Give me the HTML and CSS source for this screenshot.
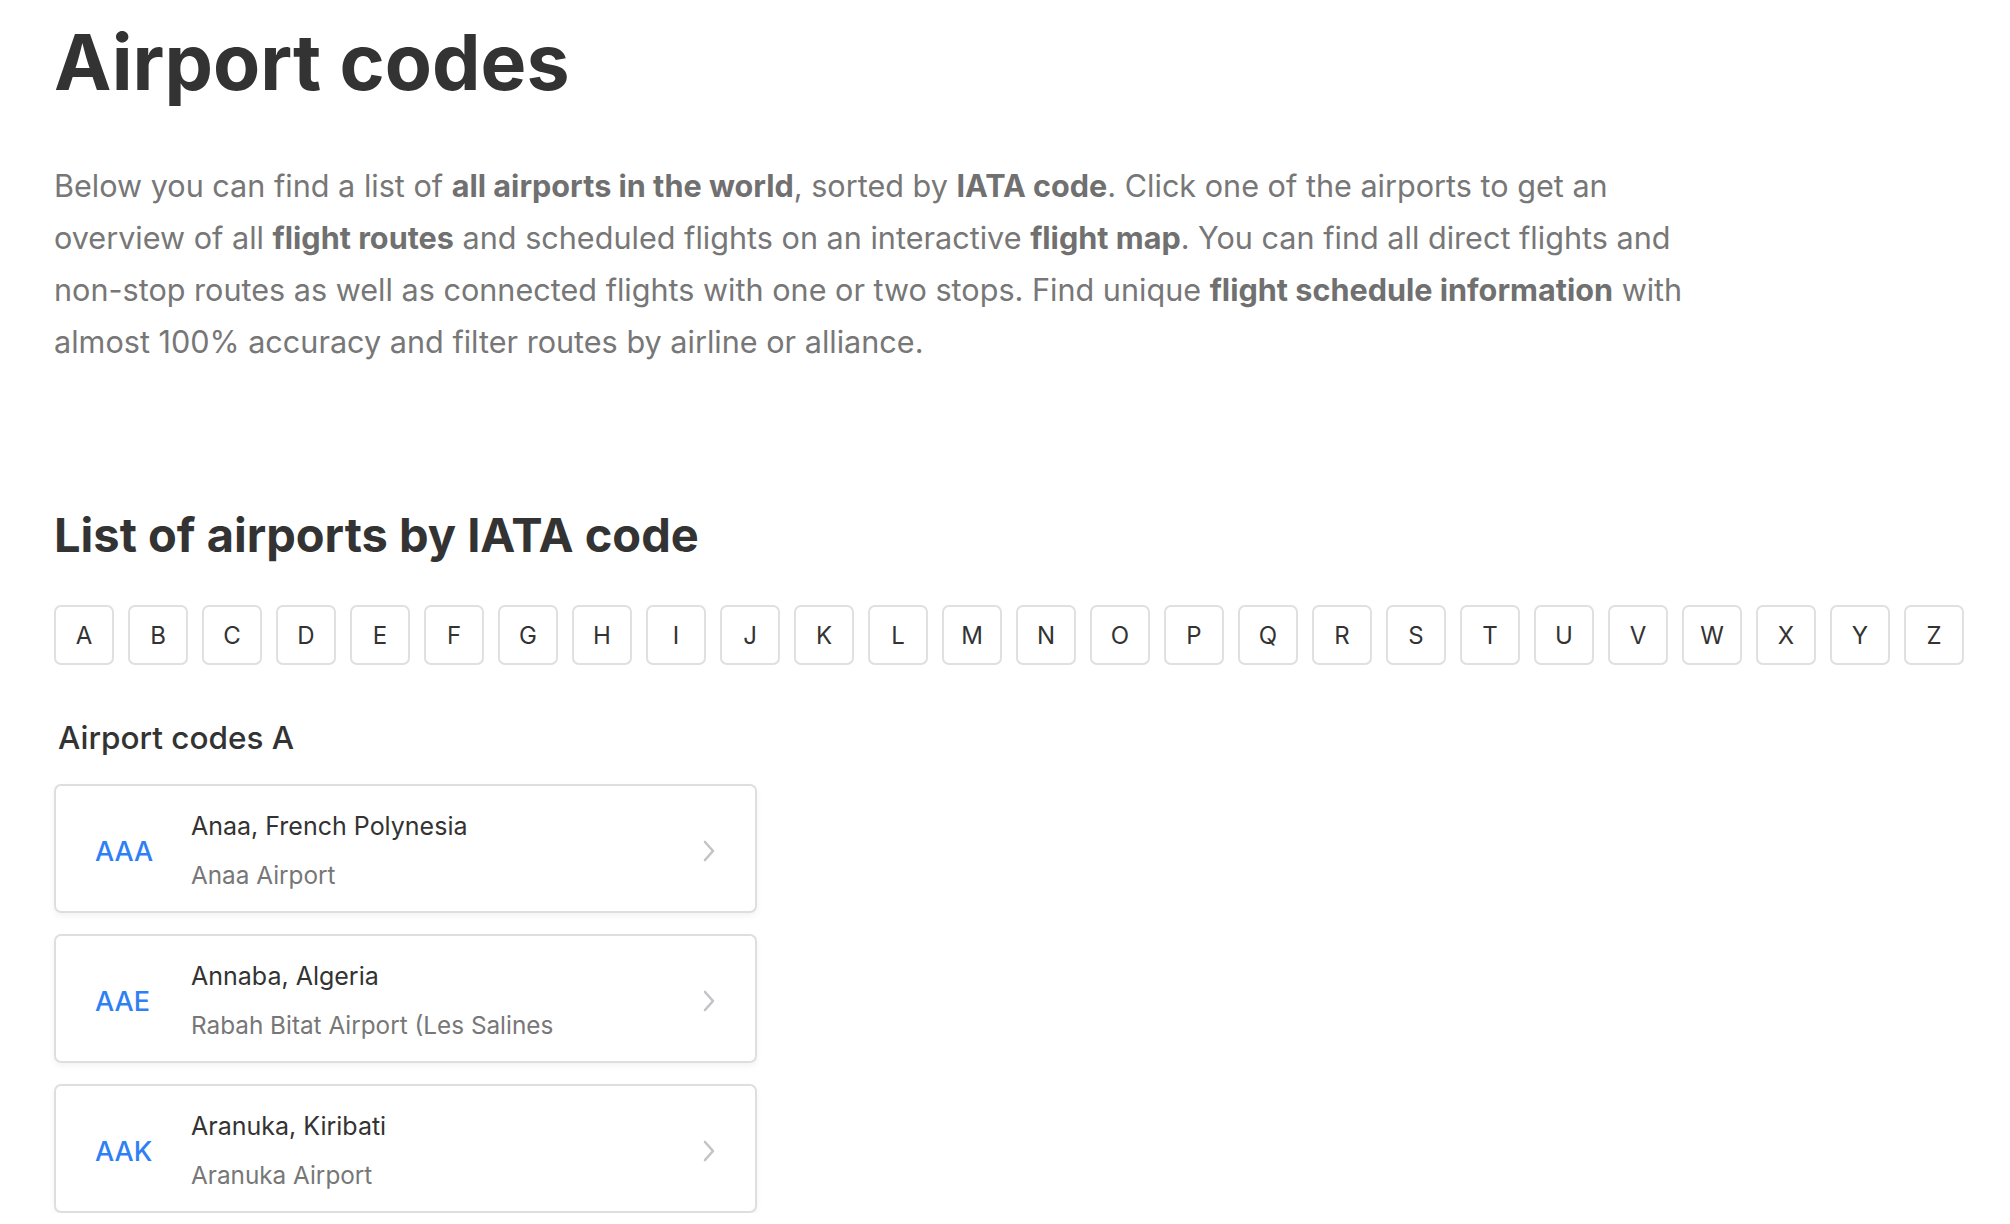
FILE: index.html
```html
<!DOCTYPE html>
<html lang="en">
<head>
<meta charset="utf-8">
<title>Airport codes</title>
<link rel="stylesheet" href="styles.css">
</head>
<body>
<main class="page">
  <h1 class="title">Airport codes</h1>
  <p class="intro">Below you can find a list of <b>all airports in the world</b>, sorted by <b>IATA code</b>. Click one of the airports to get an overview of all <b>flight routes</b> and scheduled flights on an interactive <b>flight map</b>. You can find all direct flights and non-stop routes as well as connected flights with one or two stops. Find unique <b>flight schedule information</b> with almost 100% accuracy and filter routes by airline or alliance.</p>

  <h2 class="section-title">List of airports by IATA code</h2>
  <nav class="letters">
    <a class="letter" href="#">A</a><a class="letter" href="#">B</a><a class="letter" href="#">C</a><a class="letter" href="#">D</a><a class="letter" href="#">E</a><a class="letter" href="#">F</a><a class="letter" href="#">G</a><a class="letter" href="#">H</a><a class="letter" href="#">I</a><a class="letter" href="#">J</a><a class="letter" href="#">K</a><a class="letter" href="#">L</a><a class="letter" href="#">M</a><a class="letter" href="#">N</a><a class="letter" href="#">O</a><a class="letter" href="#">P</a><a class="letter" href="#">Q</a><a class="letter" href="#">R</a><a class="letter" href="#">S</a><a class="letter" href="#">T</a><a class="letter" href="#">U</a><a class="letter" href="#">V</a><a class="letter" href="#">W</a><a class="letter" href="#">X</a><a class="letter" href="#">Y</a><a class="letter" href="#">Z</a>
  </nav>

  <h3 class="group-title">Airport codes A</h3>
  <ul class="airport-list">
    <li class="card">
      <span class="code">AAA</span>
      <span class="info"><span class="city">Anaa, French Polynesia</span><span class="airport">Anaa Airport</span></span>
      <svg class="chevron" viewBox="0 0 14 24" width="14" height="24"><polyline points="3,3 11,12 3,21" fill="none" stroke="#c4c4c8" stroke-width="2.6" stroke-linecap="round" stroke-linejoin="round"/></svg>
    </li>
    <li class="card">
      <span class="code">AAE</span>
      <span class="info"><span class="city">Annaba, Algeria</span><span class="airport">Rabah Bitat Airport (Les Salines</span></span>
      <svg class="chevron" viewBox="0 0 14 24" width="14" height="24"><polyline points="3,3 11,12 3,21" fill="none" stroke="#c4c4c8" stroke-width="2.6" stroke-linecap="round" stroke-linejoin="round"/></svg>
    </li>
    <li class="card">
      <span class="code">AAK</span>
      <span class="info"><span class="city">Aranuka, Kiribati</span><span class="airport">Aranuka Airport</span></span>
      <svg class="chevron" viewBox="0 0 14 24" width="14" height="24"><polyline points="3,3 11,12 3,21" fill="none" stroke="#c4c4c8" stroke-width="2.6" stroke-linecap="round" stroke-linejoin="round"/></svg>
    </li>
  </ul>
</main>
</body>
</html>
```

FILE: styles.css
```css
html, body {
  margin: 0;
  padding: 0;
  background: #ffffff;
}

body {
  font-family: Inter, "Liberation Sans", Arial, sans-serif;
  color: #333333;
}

.page {
  padding: 24px 0 0 54px;
}

.title {
  margin: 0;
  font-size: 77px;
  line-height: 1;
  font-weight: 700;
  color: #333333;
}

.intro {
  margin: 59px 0 0;
  width: 1672px;
  font-size: 30.6px;
  line-height: 52px;
  font-weight: 400;
  color: #777777;
}

.intro b {
  font-weight: 700;
  color: #707070;
}

.section-title {
  margin: 143px 0 0;
  font-size: 47px;
  line-height: 1;
  font-weight: 700;
  color: #333333;
}

.letters {
  display: flex;
  gap: 14px;
  margin-top: 47px;
}

.letter {
  box-sizing: border-box;
  width: 60px;
  height: 60px;
  display: flex;
  align-items: center;
  justify-content: center;
  border: 2px solid #e0e0e0;
  border-radius: 7px;
  font-size: 24px;
  color: #333333;
  text-decoration: none;
  background: #fff;
}

.group-title {
  margin: 57px 0 0;
  padding-left: 4px;
  font-size: 31.5px;
  line-height: 1;
  font-weight: 500;
  color: #333333;
}

.airport-list {
  list-style: none;
  margin: 30px 0 0;
  padding: 0;
  display: flex;
  flex-direction: column;
  gap: 21px;
}

.card {
  box-sizing: border-box;
  width: 703px;
  height: 129px;
  border: 2px solid #dedede;
  border-radius: 7px;
  box-shadow: 0 3px 6px rgba(0, 0, 0, 0.05);
  display: flex;
  align-items: center;
  padding: 6px 39px 0 39px;
}

.code {
  width: 96px;
  flex: none;
  font-size: 27px;
  font-weight: 500;
  color: #2f7ff5;
}

.info {
  flex: 1;
  display: flex;
  flex-direction: column;
}

.city {
  font-size: 25px;
  line-height: 49px;
  color: #333333;
}

.airport {
  font-size: 24.3px;
  line-height: 49px;
  color: #777777;
}

.chevron {
  flex: none;
}
```
